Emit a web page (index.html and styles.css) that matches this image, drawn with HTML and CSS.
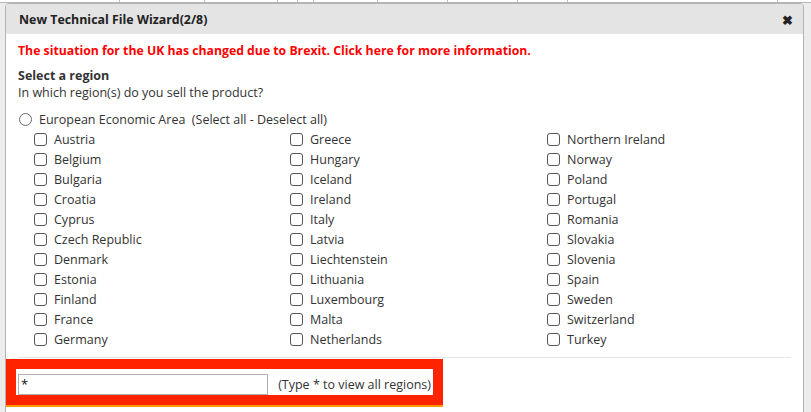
FILE: index.html
```html
<!DOCTYPE html>
<html>
<head>
<meta charset="utf-8">
<link rel="stylesheet" href="styles.css">
</head>
<body>
<div class="page">
  <div class="page-head">
    <span class="cell c1"></span><span class="cell c2"></span><span class="cell c3"></span><span class="cell c4"></span><span class="cell c5"></span><span class="cell c6"></span><span class="cell c7"></span><span class="cell c8"></span><span class="cell c9"></span><span class="cell c10"></span><span class="cell c11"></span>
  </div>
</div>
<div class="dialog">
  <div class="dialog-head">
    <span class="title">New Technical File Wizard(2/8)</span>
    <span class="close">&#x2716;</span>
  </div>
  <div class="dialog-body">
    <div class="notice">The situation for the UK has changed due to Brexit. Click here for more information.</div>
    <div class="heading">Select a region</div>
    <div class="question">In which region(s) do you sell the product?</div>
    <label class="region"><input type="radio" name="r"><span>European Economic Area&nbsp; (Select all - Deselect all)</span></label>
    <div class="countries">
      <label class="c"><input type="checkbox"><span>Austria</span></label>
      <label class="c"><input type="checkbox"><span>Belgium</span></label>
      <label class="c"><input type="checkbox"><span>Bulgaria</span></label>
      <label class="c"><input type="checkbox"><span>Croatia</span></label>
      <label class="c"><input type="checkbox"><span>Cyprus</span></label>
      <label class="c"><input type="checkbox"><span>Czech Republic</span></label>
      <label class="c"><input type="checkbox"><span>Denmark</span></label>
      <label class="c"><input type="checkbox"><span>Estonia</span></label>
      <label class="c"><input type="checkbox"><span>Finland</span></label>
      <label class="c"><input type="checkbox"><span>France</span></label>
      <label class="c"><input type="checkbox"><span>Germany</span></label>
      <label class="c"><input type="checkbox"><span>Greece</span></label>
      <label class="c"><input type="checkbox"><span>Hungary</span></label>
      <label class="c"><input type="checkbox"><span>Iceland</span></label>
      <label class="c"><input type="checkbox"><span>Ireland</span></label>
      <label class="c"><input type="checkbox"><span>Italy</span></label>
      <label class="c"><input type="checkbox"><span>Latvia</span></label>
      <label class="c"><input type="checkbox"><span>Liechtenstein</span></label>
      <label class="c"><input type="checkbox"><span>Lithuania</span></label>
      <label class="c"><input type="checkbox"><span>Luxembourg</span></label>
      <label class="c"><input type="checkbox"><span>Malta</span></label>
      <label class="c"><input type="checkbox"><span>Netherlands</span></label>
      <label class="c"><input type="checkbox"><span>Northern Ireland</span></label>
      <label class="c"><input type="checkbox"><span>Norway</span></label>
      <label class="c"><input type="checkbox"><span>Poland</span></label>
      <label class="c"><input type="checkbox"><span>Portugal</span></label>
      <label class="c"><input type="checkbox"><span>Romania</span></label>
      <label class="c"><input type="checkbox"><span>Slovakia</span></label>
      <label class="c"><input type="checkbox"><span>Slovenia</span></label>
      <label class="c"><input type="checkbox"><span>Spain</span></label>
      <label class="c"><input type="checkbox"><span>Sweden</span></label>
      <label class="c"><input type="checkbox"><span>Switzerland</span></label>
      <label class="c"><input type="checkbox"><span>Turkey</span></label>
    </div>
    <div class="sep"></div>
    <div class="highlight">
      <div class="search">
        <input class="search-input" type="text" value="*">
        <span class="hint">(Type * to view all regions)</span>
      </div>
    </div>
    <label class="region next"><input type="radio" name="r"><span></span></label>
  </div>
</div>
</body>
</html>
```
FILE: styles.css
```css
html, body {
  margin: 0;
  padding: 0;
  height: 100%;
  overflow: hidden;
}
body {
  background: #ececec;
  font-family: "Open Sans", "Noto Sans", sans-serif;
  font-size: 12px;
  color: #333;
}
.page {
  height: 100%;
}
.page-head {
  display: flex;
  height: 2px;
  background: #fff;
  border-bottom: 1px solid #b5b5b5;
}
.cell {
  border-right: 1px solid #bdbdbd;
}
.c1 { width: 119px; }
.c2 { width: 84px; }
.c3 { width: 72px; }
.c4 { width: 19px; }
.c5 { width: 15px; }
.c6 { width: 63px; }
.c7 { width: 69px; }
.c8 { width: 69px; }
.c9 { width: 49px; }
.c10 { width: 209px; }
.c11 { flex: 1; border-right: 0; }

.dialog {
  position: absolute;
  left: 5px;
  top: 3px;
  width: 797px;
  height: 420px;
  background: #fff;
  border: 1px solid #b3b3b3;
  border-radius: 4px 4px 0 0;
  overflow: hidden;
}
.dialog-head {
  height: 30px;
  background: #e4e4e4;
  display: flex;
  align-items: center;
  justify-content: space-between;
  padding: 0 10px 0 13px;
}
.title {
  font-weight: 700;
  font-size: 12.4px;
  color: #222;
}
.close {
  font-size: 13px;
  font-weight: 700;
  color: #222;
  margin-top: 2px;
}
.dialog-body {
  padding: 7px 0 0 12px;
}
.notice {
  color: #ff0000;
  font-weight: 700;
  font-size: 12.25px;
  line-height: 20px;
}
.heading {
  font-weight: 700;
  font-size: 12.5px;
  line-height: 17px;
  margin-top: 6px;
}
.question {
  line-height: 17px;
  font-size: 12.5px;
}
.region {
  display: flex;
  align-items: center;
  height: 20px;
  margin-top: 8px;
  font-size: 12.5px;
}
.region input {
  appearance: none;
  -webkit-appearance: none;
  width: 13px;
  height: 13px;
  border: 1px solid #6a6a6a;
  border-radius: 50%;
  margin: 0 7px 0 1px;
  background: #fff;
}
.countries {
  display: grid;
  grid-template-rows: repeat(11, 20px);
  grid-auto-flow: column;
  grid-template-columns: 256px 257px 256px;
  padding-left: 16px;
}
.c {
  display: flex;
  align-items: center;
  font-size: 12.5px;
}
.c input {
  appearance: none;
  -webkit-appearance: none;
  width: 13px;
  height: 13px;
  border: 1px solid #555;
  border-radius: 3px;
  margin: 0 7px 0 0;
  background: #fff;
}
.sep {
  margin: 8px 12px 1px 0;
  height: 1px;
  background: #e6e6e6;
}
.highlight {
  margin-left: -12px;
  width: 417px;
  padding: 10px;
  background: #ff2400;
  border-bottom: 2px solid #ff9a00;
}
.search {
  background: #fff;
  display: flex;
  align-items: center;
  padding: 5px 2px 1px 2px;
  gap: 10px;
  height: 20px;
  white-space: nowrap;
}
.search-input {
  box-sizing: border-box;
  width: 251px;
  height: 21px;
  margin: 0;
  border: 1px solid #b0b0b0;
  padding: 0 2px;
  font-family: "Open Sans", sans-serif;
  font-size: 13px;
  color: #111;
}
.hint {
  font-size: 12.5px;
}
.next {
  margin-top: 2px;
}
```
